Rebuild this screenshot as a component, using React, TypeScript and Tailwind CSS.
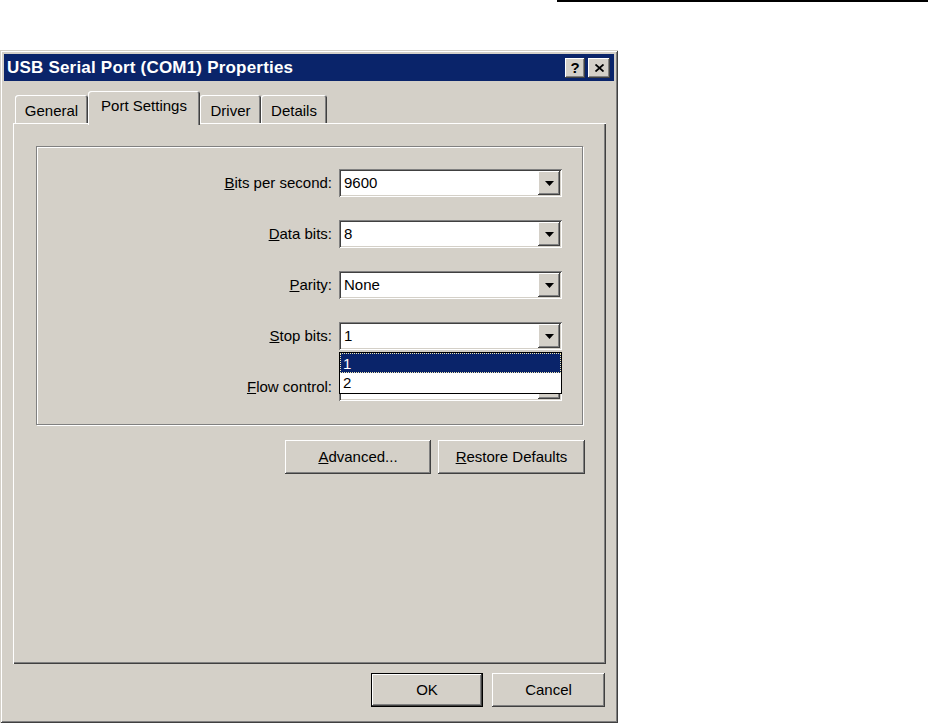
import React from 'react'

// Win2000 classic bevels
const raised =
  'shadow-[inset_-1px_-1px_0_#404040,inset_1px_1px_0_#ffffff,inset_-2px_-2px_0_#808080,inset_2px_2px_0_#d4d0c8]'
const sunken =
  'shadow-[inset_1px_1px_0_#808080,inset_-1px_-1px_0_#ffffff,inset_2px_2px_0_#404040,inset_-2px_-2px_0_#d4d0c8]'

const rows = [
  { key: 'B', rest: 'its per second:', value: '9600' },
  { key: 'D', rest: 'ata bits:', value: '8' },
  { key: 'P', rest: 'arity:', value: 'None' },
  { key: 'S', rest: 'top bits:', value: '1', open: true },
  { key: 'F', rest: 'low control:', value: '' },
]

const tabs = [
  { label: 'General', w: 'w-[73px]' },
  { label: 'Port Settings', w: 'w-[112px]', active: true },
  { label: 'Driver', w: 'w-[61px]' },
  { label: 'Details', w: 'w-[66px]' },
]

function DropButton() {
  return (
    <div className={`flex h-full w-[22px] items-center justify-center bg-[#d4d0c8] ${raised}`}>
      <svg width="9" height="5" viewBox="0 0 9 5">
        <path d="M0 0h9L4.5 5z" fill="#000" />
      </svg>
    </div>
  )
}

function Combo({ value, open }: { value: string; open?: boolean }) {
  return (
    <div className={`relative ml-[7px] flex h-[28px] w-[223px] items-center bg-white p-[2px] ${sunken}`}>
      <span className="flex-1 pl-[3px] text-black">{value}</span>
      <DropButton />
      {open && (
        <div className="absolute left-0 top-full z-20 mt-[2px] w-full border border-black bg-white leading-[20px]">
          <div className="h-[20px] border border-dotted border-[#f0e8b0] bg-[#0a246a] pl-[2px] text-white">1</div>
          <div className="h-[20px] pl-[3px] text-black">2</div>
        </div>
      )}
    </div>
  )
}

function Btn({ children, w, def }: { children: React.ReactNode; w: string; def?: boolean }) {
  const inner = (
    <div className={`flex h-full w-full items-center justify-center bg-[#d4d0c8] text-black ${raised}`}>
      {children}
    </div>
  )
  if (def) {
    return <div className={`h-[34px] ${w} border border-black`}>{inner}</div>
  }
  return <div className={`h-[34px] ${w}`}>{inner}</div>
}

export default function App() {
  return (
    <div className="h-[723px] w-[937px] overflow-hidden bg-white font-['Liberation_Sans',Arial,sans-serif] text-[15px] text-black">
      <div className="ml-[557px] h-[2px] w-[371px] bg-black" />

      {/* dialog window */}
      <div className="mt-[48px] flex h-[673px] w-[618px] flex-col bg-[#d4d0c8] p-[4px] shadow-[inset_1px_1px_0_#d4d0c8,inset_-1px_-1px_0_#404040,inset_2px_2px_0_#ffffff,inset_-2px_-2px_0_#808080]">
        {/* title bar */}
        <div className="flex h-[27px] items-center bg-[#0a246a] pl-[3px] pr-[4px]">
          <span className="flex-1 text-[17px] font-bold tracking-[0.2px] text-white">USB Serial Port (COM1) Properties</span>
          <div className={`flex h-[20px] w-[20px] items-center justify-center bg-[#d4d0c8] text-[15px] font-bold leading-none ${raised}`}>
            ?
          </div>
          <div className={`ml-[3px] flex h-[20px] w-[22px] items-center justify-center bg-[#d4d0c8] ${raised}`}>
            <svg width="9" height="8" viewBox="0 0 9 8">
              <path d="M0.5 0.5l8 7M8.5 0.5l-8 7" stroke="#000" strokeWidth="1.8" />
            </svg>
          </div>
        </div>

        <div className="flex flex-1 flex-col pl-[9px] pr-[8px] pt-[10px]">
          {/* tabs */}
          <div className="flex h-[32px] items-end pl-[2px]">
            {tabs.map((t) =>
              t.active ? (
                <div
                  key={t.label}
                  className={`relative z-10 -mb-[2px] h-[34px] ${t.w} rounded-t-[3px] bg-[#d4d0c8] pt-[4px] text-center shadow-[inset_1px_1px_0_#ffffff,inset_-1px_0_0_#404040,inset_-2px_0_0_#808080]`}
                >
                  {t.label}
                </div>
              ) : (
                <div
                  key={t.label}
                  className={`h-[28px] ${t.w} rounded-t-[3px] bg-[#d4d0c8] pt-[5px] text-center shadow-[inset_1px_1px_0_#ffffff,inset_-1px_0_0_#404040,inset_-2px_0_0_#808080]`}
                >
                  {t.label}
                </div>
              )
            )}
          </div>

          {/* tab panel */}
          <div className="h-[541px] pl-[23px] pt-[23px] shadow-[inset_1px_1px_0_#ffffff,inset_-1px_-1px_0_#404040,inset_-2px_-2px_0_#808080]">
            <div className="flex h-[279px] w-[547px] flex-col gap-[23px] border border-[#808080] pt-[22px] shadow-[inset_1px_1px_0_#ffffff,1px_1px_0_#ffffff]">
              {rows.map((r) => (
                <div key={r.key} className="flex items-center justify-end pr-[20px]">
                  <span>
                    <u>{r.key}</u>
                    {r.rest}
                  </span>
                  <Combo value={r.value} open={r.open} />
                </div>
              ))}
            </div>

            <div className="mt-[15px] flex w-[549px] justify-end gap-[7px]">
              <Btn w="w-[146px]">
                <span>
                  <u>A</u>dvanced...
                </span>
              </Btn>
              <Btn w="w-[147px]">
                <span>
                  <u>R</u>estore Defaults
                </span>
              </Btn>
            </div>
          </div>

          {/* dialog buttons */}
          <div className="mt-[9px] flex justify-end gap-[9px] pr-[1px]">
            <Btn w="w-[112px]" def>
              OK
            </Btn>
            <Btn w="w-[113px]">Cancel</Btn>
          </div>
        </div>
      </div>
    </div>
  )
}
